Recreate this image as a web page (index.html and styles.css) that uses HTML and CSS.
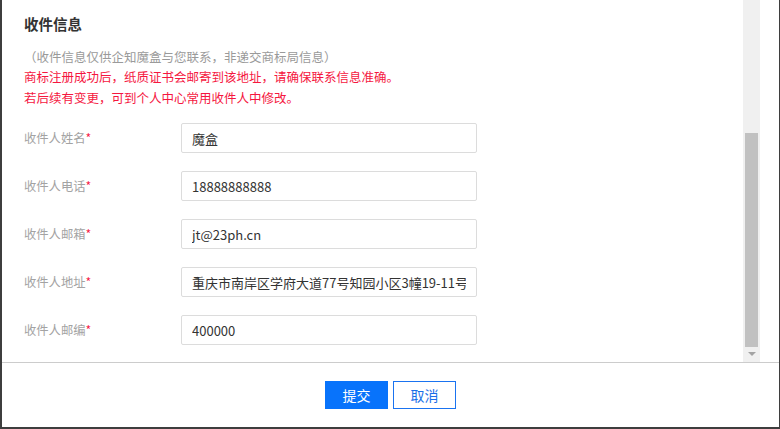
FILE: index.html
```html
<!DOCTYPE html>
<html lang="zh-CN">
<head>
  <meta charset="utf-8"/>
  <title>收件信息</title>
  <link rel="stylesheet" href="styles.css">
</head>
<body>

  <div class="dialogo">

    <div class="cuerpo">
      <div class="contenido">
        <h3 class="titulo">收件信息</h3>
        <p class="nota">（收件信息仅供企知魔盒与您联系，非递交商标局信息）</p>
        <p class="aviso">商标注册成功后，纸质证书会邮寄到该地址，请确保联系信息准确。</p>
        <p class="aviso">若后续有变更，可到个人中心常用收件人中修改。</p>

        <div class="formulario">
          <div class="fila">
            <label class="etiqueta">收件人姓名<span class="req">*</span></label>
            <input class="campo" type="text" value="魔盒">
          </div>
          <div class="fila">
            <label class="etiqueta">收件人电话<span class="req">*</span></label>
            <input class="campo" type="text" value="18888888888">
          </div>
          <div class="fila">
            <label class="etiqueta">收件人邮箱<span class="req">*</span></label>
            <input class="campo" type="text" value="jt@23ph.cn">
          </div>
          <div class="fila">
            <label class="etiqueta">收件人地址<span class="req">*</span></label>
            <input class="campo" type="text" value="重庆市南岸区学府大道77号知园小区3幢19-11号">
          </div>
          <div class="fila">
            <label class="etiqueta">收件人邮编<span class="req">*</span></label>
            <input class="campo" type="text" value="400000">
          </div>
        </div>
      </div>

      <div class="barra">
        <div class="pista">
          <div class="pulgar"></div>
        </div>
        <div class="flecha"></div>
      </div>
    </div>

    <div class="pie">
      <div class="boton primario">提交</div>
      <div class="boton">取消</div>
    </div>

  </div>

</body>
</html>
```

FILE: styles.css
```css
body{
  margin:0;
  font-family:"Noto Sans CJK SC","Noto Sans",sans-serif;
  background-color:#fff;
}

.dialogo{
  width:780px;
  height:429px;
  box-sizing:border-box;
  border-left:2px solid #3e3e3e;
  border-right:1px solid #3e3e3e;
  border-bottom:2px solid #3e3e3e;
  background-color:#fff;
  display:flex;
  flex-direction:column;
}

.cuerpo{
  height:362px;
  display:flex;
  border-bottom:1px solid #cccccc;
}

.contenido{
  width:739px;
  padding-left:22px;
  box-sizing:border-box;
}

.titulo{
  margin:14px 0 0 0;
  font-size:14.5px;
  line-height:20px;
  font-weight:bold;
  color:#333;
}

.nota,.aviso{
  margin:0;
  font-size:12.5px;
  line-height:20px;
}

.nota{
  margin-top:13px;
  color:#9a9a9a;
}

.aviso{
  color:#f5173f;
}

.aviso + .aviso{
  margin-top:1px;
}

.formulario{
  margin-top:15px;
  display:flex;
  flex-direction:column;
  gap:18px;
}

.fila{
  display:flex;
  align-items:center;
  height:30px;
}

.etiqueta{
  width:157px;
  font-size:12.3px;
  color:#a3a3a3;
}

.req{
  color:#f5173f;
}

.campo{
  width:296px;
  height:30px;
  box-sizing:border-box;
  border:1px solid #dcdcdc;
  border-radius:2px;
  padding:0 10px;
  font-family:inherit;
  font-size:13px;
  color:#333;
  outline:none;
}

.barra{
  width:17px;
  margin-left:2px;
  background-color:#f0f0f0;
  display:flex;
  flex-direction:column;
  align-items:center;
}

.pista{
  flex:1;
  width:13px;
  position:relative;
}

.pulgar{
  position:absolute;
  top:133px;
  left:0;
  width:13px;
  height:214px;
  background-color:#c1c1c1;
}

.flecha{
  width:0;
  height:0;
  margin:5px 0 6px 0;
  border-left:4px solid transparent;
  border-right:4px solid transparent;
  border-top:4px solid #a3a3a3;
}

.pie{
  flex:1;
  display:flex;
  justify-content:center;
  align-items:center;
  gap:5px;
}

.boton{
  width:63px;
  height:28px;
  box-sizing:border-box;
  border:1px solid #1a73f0;
  color:#1a6fe8;
  background-color:#fff;
  font-size:14px;
  line-height:26px;
  text-align:center;
  cursor:pointer;
  user-select:none;
}

.primario{
  background-color:#0873fb;
  border-color:#0873fb;
  color:#fff;
}
```
